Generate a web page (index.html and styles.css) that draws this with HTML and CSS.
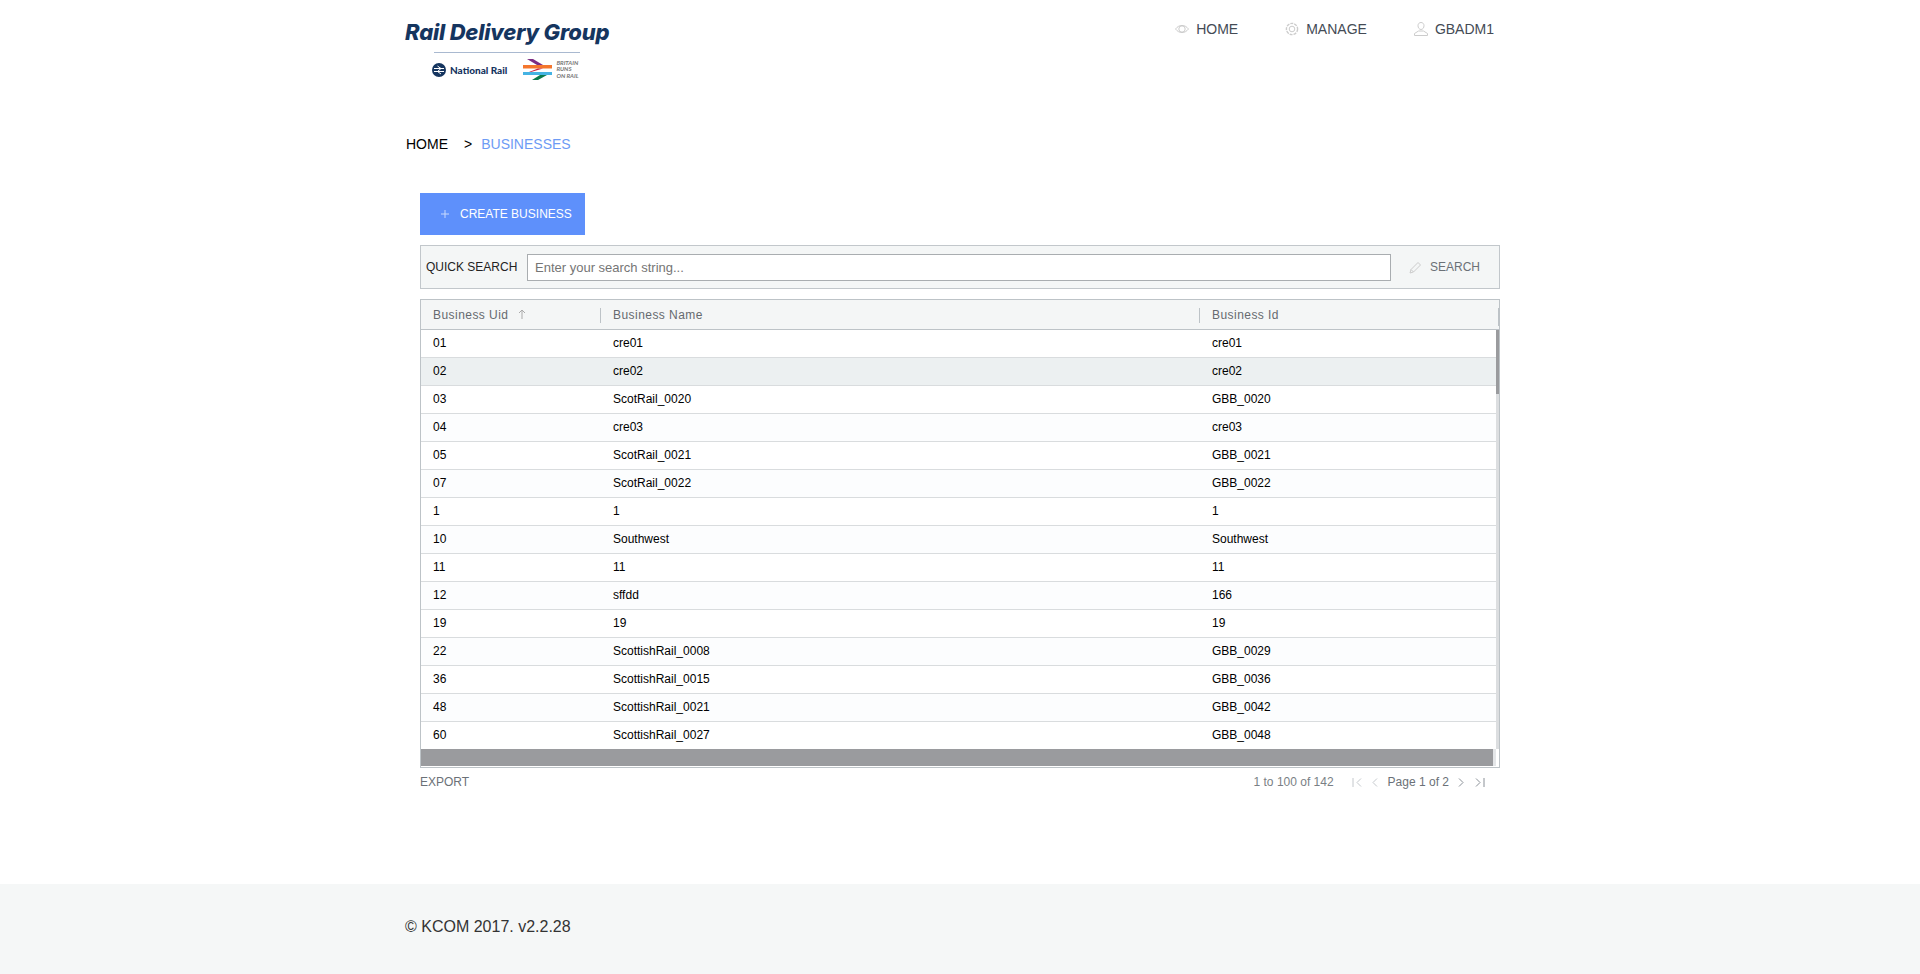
FILE: index.html
```html
<!DOCTYPE html>
<html lang="en">

<head>
    <meta charset="UTF-8">
    <meta name="viewport" content="width=device-width, initial-scale=1.0">
    <title>Businesses</title>
    <link rel="stylesheet" href="styles.css">
</head>

<body>

    <div class="wrap">
        <header class="topbar">
            <div class="logo">
                <div class="logo-name">Rail Delivery Group</div>
                <div class="logo-line"></div>
                <div class="logo-sub">
                    <svg class="nr-mark" width="14" height="14" viewBox="0 0 14 14">
                        <circle cx="7" cy="7" r="7" fill="#15355f" />
                        <path d="M2 5.500h10M2 8.500h10M5.500 3l3.500 2.500-3.500 3 3.500 2.500" fill="none" stroke="#fff" stroke-width="1" />
                    </svg>
                    <span class="nr-text">National Rail</span>
                    <svg class="brr-mark" width="29" height="21" viewBox="0 0 29 21">
                        <path d="M4 0h6l10 6h-6z" fill="#7b2d83" />
                        <path d="M0 6h29v3.500H0z" fill="#f4762d" />
                        <path d="M8 13l12-3.500h-5l-9 3.500z" fill="#c8203f" />
                        <path d="M0 13h29v3H0z" fill="#45b3e3" />
                        <path d="M9 21h6l9-5h-7z" fill="#0b7a4d" />
                    </svg>
                    <span class="brr-text">BRITAIN<br>RUNS<br>ON RAIL</span>
                </div>
            </div>
            <nav class="topnav">
                <a class="topnav-item">
                    <svg width="14" height="14" viewBox="0 0 14 14" fill="none" stroke="#ccc">
                        <path d="M.5 7c2-2.500 4-3.500 6.500-3.500S11.500 4.500 13.500 7c-2 2.500-4 3.500-6.500 3.500S2.500 9.500.5 7z" />
                        <circle cx="7" cy="7" r="3.200" />
                    </svg>
                    HOME
                </a>
                <a class="topnav-item">
                    <svg width="14" height="14" viewBox="0 0 14 14" fill="none" stroke="#ccc">
                        <circle cx="7" cy="7" r="5.600" stroke-dasharray="3 1" stroke-width="1.400" />
                        <circle cx="7" cy="7" r="2.800" />
                    </svg>
                    MANAGE
                </a>
                <a class="topnav-item">
                    <svg width="14" height="14" viewBox="0 0 14 14" fill="none" stroke="#ccc">
                        <path d="M7 .5c1.800 0 3 1.300 3 3.200S8.800 7.500 7 7.500 4 5.600 4 3.700 5.200.5 7 .5z" />
                        <path d="M.5 13.500v-2l4-2.500h5l4 2.500v2z" />
                    </svg>
                    GBADM1
                </a>
            </nav>
        </header>

        <div class="crumbs">
            <span>HOME</span>
            <span class="crumbs-sep">&gt;</span>
            <span class="crumbs-now">BUSINESSES</span>
        </div>

        <main class="panel">
            <div class="btn-create">
                <svg class="btn-plus" width="8" height="8" viewBox="0 0 8 8" stroke="#c9dafd">
                    <path d="M4 0v8M0 4h8" />
                </svg>
                CREATE BUSINESS
            </div>

            <div class="search">
                <label class="search-label">QUICK SEARCH</label>
                <input class="search-input" type="text" placeholder="Enter your search string...">
                <div class="search-btn">
                    <svg width="13" height="13" viewBox="0 0 13 13" fill="none" stroke="#ccc">
                        <path d="M1 12l1-3.500 7-7 2.500 2.500-7 7z" />
                        <path d="M2 8.500l2.500 2.500" />
                    </svg>
                    SEARCH
                </div>
            </div>

            <div class="grid">
                <div class="grid-head">
                    <div class="cell c1">Business Uid
                        <svg class="sort" width="8" height="10" viewBox="0 0 8 10" fill="none" stroke="#aaa">
                            <path d="M4 10V1M1 4l3-3 3 3" />
                        </svg>
                    </div>
                    <div class="cell c2">Business Name</div>
                    <div class="cell c3">Business Id</div>
                </div>
                <div class="grid-body">
                    <div class="rows">
                        <div class="row"><div class="cell c1">01</div><div class="cell c2">cre01</div><div class="cell c3">cre01</div></div>
                        <div class="row hover"><div class="cell c1">02</div><div class="cell c2">cre02</div><div class="cell c3">cre02</div></div>
                        <div class="row"><div class="cell c1">03</div><div class="cell c2">ScotRail_0020</div><div class="cell c3">GBB_0020</div></div>
                        <div class="row"><div class="cell c1">04</div><div class="cell c2">cre03</div><div class="cell c3">cre03</div></div>
                        <div class="row"><div class="cell c1">05</div><div class="cell c2">ScotRail_0021</div><div class="cell c3">GBB_0021</div></div>
                        <div class="row"><div class="cell c1">07</div><div class="cell c2">ScotRail_0022</div><div class="cell c3">GBB_0022</div></div>
                        <div class="row"><div class="cell c1">1</div><div class="cell c2">1</div><div class="cell c3">1</div></div>
                        <div class="row"><div class="cell c1">10</div><div class="cell c2">Southwest</div><div class="cell c3">Southwest</div></div>
                        <div class="row"><div class="cell c1">11</div><div class="cell c2">11</div><div class="cell c3">11</div></div>
                        <div class="row"><div class="cell c1">12</div><div class="cell c2">sffdd</div><div class="cell c3">166</div></div>
                        <div class="row"><div class="cell c1">19</div><div class="cell c2">19</div><div class="cell c3">19</div></div>
                        <div class="row"><div class="cell c1">22</div><div class="cell c2">ScottishRail_0008</div><div class="cell c3">GBB_0029</div></div>
                        <div class="row"><div class="cell c1">36</div><div class="cell c2">ScottishRail_0015</div><div class="cell c3">GBB_0036</div></div>
                        <div class="row"><div class="cell c1">48</div><div class="cell c2">ScottishRail_0021</div><div class="cell c3">GBB_0042</div></div>
                        <div class="row"><div class="cell c1">60</div><div class="cell c2">ScottishRail_0027</div><div class="cell c3">GBB_0048</div></div>
                        <div class="grid-hbar"></div>
                    </div>
                    <div class="grid-vbar"><div class="grid-thumb"></div></div>
                </div>
            </div>

            <div class="grid-foot">
                <span class="export">EXPORT</span>
                <div class="pager">
                    <span class="pager-count">1 to 100 of 142</span>
                    <svg width="11" height="9" viewBox="0 0 11 9" fill="none" stroke="#c4c8cc"><path d="M1 0v9M9 .5l-4 4 4 4" /></svg>
                    <svg class="pager-prev" width="8" height="9" viewBox="0 0 8 9" fill="none" stroke="#c4c8cc"><path d="M6 .5l-4 4 4 4" /></svg>
                    <span class="pager-page">Page 1 of 2</span>
                    <svg class="pager-next" width="8" height="9" viewBox="0 0 8 9" fill="none" stroke="#8a9097"><path d="M2 .5l4 4-4 4" /></svg>
                    <svg width="11" height="9" viewBox="0 0 11 9" fill="none" stroke="#8a9097"><path d="M2 .5l4 4-4 4M10 0v9" /></svg>
                </div>
            </div>
        </main>
    </div>

    <footer class="footer">
        <div class="footer-in">© KCOM 2017. v2.2.28</div>
    </footer>

</body>

</html>
```

FILE: styles.css
```css
* {
    box-sizing: border-box;
}

body {
    margin: 0;
    font-family: "Liberation Sans", Arial, sans-serif;
    background-color: #fff;
    color: #000;
}

.wrap {
    width: 1110px;
    height: 884px;
    margin: 0 auto;
}

.topbar {
    display: flex;
    justify-content: space-between;
    height: 136px;
}

.logo {
    width: 206px;
    padding-top: 18px;
}

.logo-name {
    font-family: Inter, sans-serif;
    font-weight: 800;
    font-style: italic;
    font-size: 22px;
    line-height: 29px;
    letter-spacing: -0.2px;
    color: #15355f;
    white-space: nowrap;
}

.logo-line {
    width: 146px;
    height: 1px;
    margin: 5px 0 0 29px;
    background-color: #a9b9d0;
}

.logo-sub {
    display: flex;
    align-items: center;
    margin: 6px 0 0 27px;
}

.nr-text {
    margin-left: 4px;
    font-family: Lato, sans-serif;
    font-weight: 900;
    font-size: 10px;
    color: #15355f;
    white-space: nowrap;
}

.brr-mark {
    margin-left: 16px;
}

.brr-text {
    margin-left: 4px;
    font-family: Lato, sans-serif;
    font-weight: 700;
    font-style: italic;
    font-size: 6px;
    line-height: 6.500px;
    color: #777;
}

.topnav {
    display: flex;
    gap: 47px;
    padding: 21px 21px 0 0;
}

.topnav-item {
    display: flex;
    align-items: flex-start;
    gap: 7px;
    height: 16px;
    font-size: 14px;
    line-height: 16px;
    color: #444b55;
}

.topnav-item svg {
    margin-top: 1px;
}

.crumbs {
    display: flex;
    margin-left: 1px;
    font-size: 14px;
    line-height: 16px;
}

.crumbs-sep {
    margin: 0 9px 0 16px;
}

.crumbs-now {
    color: #6d9bf5;
}

.panel {
    width: 1080px;
    margin: 41px 0 0 15px;
}

.btn-create {
    display: flex;
    align-items: center;
    width: 165px;
    height: 42px;
    padding-left: 21px;
    background-color: #5e90fb;
    color: #fff;
    font-size: 12px;
}

.btn-plus {
    margin-right: 11px;
}

.search {
    display: flex;
    align-items: center;
    height: 44px;
    margin-top: 10px;
    padding: 0 5px;
    border: 1px solid #c2c7cb;
    background-color: #f4f6f6;
}

.search-label {
    width: 101px;
    font-size: 12px;
    color: #222;
    white-space: nowrap;
}

.search-input {
    width: 864px;
    height: 27px;
    padding: 0 7px;
    border: 1px solid #a9adb0;
    border-radius: 0;
    outline: none;
    font-family: inherit;
    font-size: 13px;
}

.search-input::placeholder {
    color: #757575;
}

.search-btn {
    display: flex;
    align-items: center;
    gap: 8px;
    margin-left: 18px;
    font-size: 12px;
    color: #6b7177;
}

.grid {
    margin-top: 10px;
    border: 1px solid #bdc3c7;
}

.grid-head {
    display: flex;
    position: relative;
    height: 30px;
    border-bottom: 1px solid #bdc3c7;
    background-color: #f4f6f6;
    color: #666a6f;
    font-size: 12px;
    letter-spacing: 0.45px;
    line-height: 31px;
}

.grid-head::after {
    content: "";
    position: absolute;
    right: 0;
    top: 8px;
    height: 18px;
    width: 1px;
    background-color: #bdc3c7;
}

.grid-head .cell {
    position: relative;
}

.grid-head .c2::before,
.grid-head .c3::before {
    content: "";
    position: absolute;
    left: 0;
    top: 8px;
    height: 15px;
    width: 1px;
    background-color: #bdc3c7;
}

.sort {
    margin-left: 6px;
}

.cell {
    padding-left: 12px;
    flex: none;
}

.c1 {
    width: 179px;
}

.c2 {
    width: 599px;
    padding-left: 13px;
}

.c3 {
    width: 297px;
    padding-left: 13px;
}

.grid-body {
    display: flex;
    align-items: flex-start;
    height: 437px;
}

.rows {
    flex: 1;
    min-width: 0;
    overflow: hidden;
}

.row {
    display: flex;
    height: 28px;
    border-bottom: 1px solid #d9dcde;
    font-size: 12px;
    line-height: 27px;
    background-color: #fff;
}

.row:nth-child(even) {
    background-color: #fcfdfe;
}

.row.hover {
    background-color: #ecf0f1;
}

.grid-hbar {
    height: 17px;
    margin-top: -1px;
    border-right: 3px solid #e4e6e8;
    background-color: #9a9b9e;
}

.grid-vbar {
    width: 3px;
    height: 419px;
    background-color: #dcdee0;
}

.grid-thumb {
    height: 64px;
    background-color: #9a9b9e;
}

.grid-foot {
    display: flex;
    justify-content: space-between;
    margin-top: 7px;
    font-size: 12px;
    line-height: 14px;
    color: #6b7177;
}

.pager {
    display: flex;
    align-items: center;
    padding-right: 15px;
}

.pager-count {
    margin-right: 18px;
    color: #7a7f85;
}

.pager-prev {
    margin-left: 8px;
}

.pager-page {
    margin: 0 8px 0 9px;
}

.pager-next {
    margin-right: 9px;
}

.footer {
    height: 90px;
    background-color: #f5f7f7;
}

.footer-in {
    width: 1110px;
    margin: 0 auto;
    padding-top: 34px;
    font-size: 16px;
    line-height: 18px;
    color: #333;
}
```
